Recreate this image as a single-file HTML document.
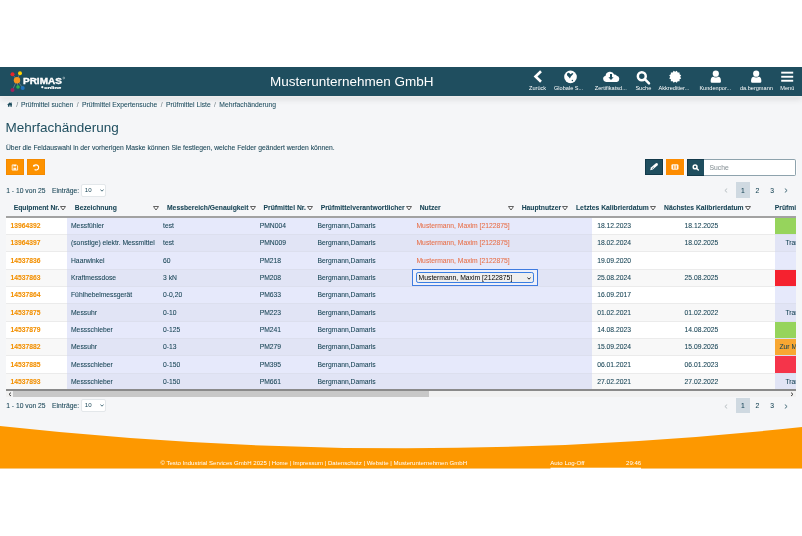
<!DOCTYPE html><html><head><meta charset="utf-8"><style>
*{box-sizing:border-box;margin:0;padding:0}
html,body{width:802px;height:536px;overflow:hidden;background:#fff;font-family:"Liberation Sans",sans-serif;color:#194556}
.a{position:absolute;white-space:nowrap}
#page{position:absolute;left:0;top:67px;width:802px;height:402px;background:#f5f6f8;overflow:hidden;will-change:transform}
#hdr{position:absolute;left:0;top:0;width:802px;height:29px;background:#1f4e5f;box-shadow:0 1.5px 0 #ecebeb,0 4px 6px rgba(0,0,0,.09)}
.lbl{position:absolute;top:18px;font-size:5.6px;line-height:7px;color:#fff;white-space:nowrap}
.t{font-size:6.75px;line-height:9px;-webkit-text-stroke:0.07px}
.b{font-weight:bold}
</style></head><body><div id="page">
<div id="hdr">
<svg class="a" style="left:0;top:0" width="80" height="29" viewBox="0 0 80 29">
<g stroke="#9aa" stroke-width="0.6" opacity="0.8"><line x1="17" y1="13" x2="12.5" y2="7.3"/><line x1="17" y1="13" x2="20" y2="6"/><line x1="17" y1="13" x2="12.5" y2="23"/><line x1="17" y1="13" x2="18" y2="20"/><line x1="17" y1="13" x2="22.7" y2="21"/></g>
<circle cx="12.5" cy="7.3" r="2" fill="#e8262a"/>
<circle cx="20" cy="6.3" r="2" fill="#ffd200"/>
<circle cx="17" cy="13.2" r="3.2" fill="#f7941d"/>
<circle cx="18" cy="20" r="1.8" fill="#2db34a"/>
<circle cx="22.7" cy="21" r="2" fill="#1e73be"/>
<circle cx="12.5" cy="23" r="2" fill="#a0205a"/>
<text x="23" y="16.5" font-family="Liberation Sans" font-weight="bold" font-size="8.8" textLength="38.8" lengthAdjust="spacingAndGlyphs" fill="#fff" stroke="#fff" stroke-width="0.35">PRIMAS</text>
<circle cx="63.8" cy="11" r="0.9" fill="none" stroke="#fff" stroke-width="0.4"/>
<circle cx="42.3" cy="20.2" r="1.1" fill="#fff"/>
<text x="44.2" y="21.6" font-family="Liberation Sans" font-weight="bold" font-size="4.2" textLength="17" lengthAdjust="spacingAndGlyphs" fill="#fff" stroke="#fff" stroke-width="0.2">online</text>
</svg>
<div class="a" style="left:270px;top:5.5px;font-size:13.5px;line-height:17px;color:#fff">Musterunternehmen GmbH</div>
<svg class="a" style="left:500px;top:0" width="302" height="29" viewBox="500 67 302 29">
<polyline points="541,71.2 535.5,76.5 541,81.8" fill="none" stroke="#fff" stroke-width="2.6" stroke-linecap="butt" stroke-linejoin="miter"/>
<circle cx="570.5" cy="76.9" r="6.3" fill="#fff"/>
<path d="M566.9,74.4 Q567,72.7 568.6,72.8 Q569.8,73 570.2,74.3 L572.5,72.9 L573.4,73.8 L570.9,76.6 L569.9,78.4 L568.7,77 Q566.9,75.8 566.9,74.4 Z" fill="#1f4e5f"/>
<circle cx="572.4" cy="80.5" r="0.75" fill="#1f4e5f"/>
<path d="M606,82 a3.2,3.2 0 0 1 -0.4,-6.3 a4.5,4.5 0 0 1 8.6,-1.2 a3,3 0 0 1 2.6,1.3 a3.2,3.2 0 0 1 0.2,6.2 z" fill="#fff"/>
<path d="M610.3,74 v3.2 h-1.6 l2.6,2.8 2.6,-2.8 h-1.6 v-3.2 z" fill="#1f4e5f" transform="translate(-0.3,0)"/>
<circle cx="641.8" cy="76.2" r="3.95" fill="none" stroke="#fff" stroke-width="2.5"/>
<line x1="644.8" y1="79.2" x2="649" y2="83.4" stroke="#fff" stroke-width="2.5" stroke-linecap="round"/>
<polygon points="681.19,78.40 679.53,79.30 679.58,81.18 677.70,81.13 676.80,82.79 675.20,81.80 673.60,82.79 672.70,81.13 670.82,81.18 670.87,79.30 669.21,78.40 670.20,76.80 669.21,75.20 670.87,74.30 670.82,72.42 672.70,72.47 673.60,70.81 675.20,71.80 676.80,70.81 677.70,72.47 679.58,72.42 679.53,74.30 681.19,75.20 680.20,76.80" fill="#fff"/>
<path d="M710.70,81.6 V80.4 Q710.70,76.5 714.30,76.5 H717.30 Q720.90,76.5 720.90,80.4 V81.6 Q720.90,82.8 719.80,82.8 H711.80 Q710.70,82.8 710.70,81.6 Z" fill="#fff"/>
<circle cx="715.8" cy="73.7" r="3.7" fill="#1f4e5f"/>
<circle cx="715.8" cy="73.7" r="3.1" fill="#fff"/>
<path d="M751.10,81.6 V80.4 Q751.10,76.5 754.70,76.5 H757.70 Q761.30,76.5 761.30,80.4 V81.6 Q761.30,82.8 760.20,82.8 H752.20 Q751.10,82.8 751.10,81.6 Z" fill="#fff"/>
<circle cx="756.2" cy="73.7" r="3.7" fill="#1f4e5f"/>
<circle cx="756.2" cy="73.7" r="3.1" fill="#fff"/>
<rect x="781.2" y="71.7" width="12" height="1.9" fill="#fff"/>
<rect x="781.2" y="75.8" width="12" height="1.9" fill="#fff"/>
<rect x="781.2" y="79.8" width="12" height="1.9" fill="#fff"/>
</svg>
<div class="lbl" style="left:529px">Zurück</div>
<div class="lbl" style="left:554px">Globale S...</div>
<div class="lbl" style="left:594.8px">Zertifikatsd...</div>
<div class="lbl" style="left:635.4px">Suche</div>
<div class="lbl" style="left:658.5px">Akkreditier...</div>
<div class="lbl" style="left:699.4px">Kundenpor...</div>
<div class="lbl" style="left:739.9px">da.bergmann</div>
<div class="lbl" style="left:780.3px">Menü</div>
</div>
<svg class="a" style="left:6.7px;top:35px" width="5.8" height="4.8" viewBox="0 0 12 10"><path d="M6,0.5 L0.3,5.5 1.2,6.4 2,5.7 V10 H5 V7 H7 V10 H10 V5.7 L10.8,6.4 11.7,5.5 9.8,3.8 V1 H8.4 V2.6 Z" fill="#1f4e5f"/></svg>
<div class="a t" style="left:16.2px;top:32.5px;color:#1f4e5f"><span style="color:#7d8a90">/</span><span style="margin-left:3px">Prüfmittel suchen</span><span style="margin:0 3.4px;color:#7d8a90">/</span>Prüfmittel Expertensuche<span style="margin:0 3.4px;color:#7d8a90">/</span>Prüfmittel Liste<span style="margin:0 3.4px;color:#7d8a90">/</span>Mehrfachänderung</div>
<div class="a" style="left:5.5px;top:51.5px;font-size:13.5px;line-height:17px;color:#1f4e5f">Mehrfachänderung</div>
<div class="a t" style="left:6px;top:76px">Über die Feldauswahl in der vorherigen Maske können Sie festlegen, welche Felder geändert werden können.</div>
<div class="a" style="left:6px;top:92px;width:18px;height:16px;background:#fd9200;border:0.7px solid #f48a00"></div>
<svg class="a" style="left:6px;top:92px" width="18" height="16" viewBox="0 0 18 16">
<path d="M6.2,5.9 h4.3 l1.1,1.1 v4.1 h-5.4 z" fill="none" stroke="#fff" stroke-width="0.9" opacity=".9"/>
<rect x="7.4" y="5.9" width="2.6" height="1.5" fill="#fff" opacity=".9"/>
<rect x="7.4" y="8.7" width="2.8" height="2.2" fill="#fff" opacity=".9"/>
</svg>
<div class="a" style="left:27px;top:92px;width:18px;height:16px;background:#fd9200;border:0.7px solid #f48a00"></div>
<svg class="a" style="left:27px;top:92px" width="18" height="16" viewBox="0 0 18 16">
<path d="M7.6,10.6 A2.6,2.6 0 1 0 8.4,5.9" fill="none" stroke="#fff" stroke-width="1.15"/>
<polygon points="6.1,6.1 8.6,5.3 8.6,7.2 6.1,7.7" fill="#fff"/>
</svg>
<div class="a" style="left:644.5px;top:91.5px;width:19px;height:16.5px;background:#fff;opacity:.7"></div>
<div class="a" style="left:645px;top:92.4px;width:17.8px;height:15.6px;background:#1f4e5f;border:0.7px solid #12394a"></div>
<svg class="a" style="left:645px;top:92.4px" width="18" height="16" viewBox="0 0 18 16">
<path d="M5.2,11.2 L5.9,8.6 L10.6,4.4 Q11.9,3.6 12.7,4.5 Q13.3,5.5 12.4,6.5 L7.8,10.6 Z" fill="#fff"/><line x1="7" y1="9.8" x2="8.8" y2="8.1" stroke="#1f4e5f" stroke-width="0.6"/>
</svg>
<div class="a" style="left:665.7px;top:91.5px;width:19px;height:16.5px;background:#fff;opacity:.7"></div>
<div class="a" style="left:666.2px;top:92.4px;width:17.7px;height:15.6px;background:#fd8c00"></div>
<svg class="a" style="left:666.2px;top:92.4px" width="18" height="16" viewBox="0 0 18 16">
<rect x="5.4" y="5.2" width="7.1" height="5.6" rx="1.4" fill="#fff" opacity=".92"/>
<rect x="7.3" y="6.4" width="1" height="3.4" fill="#fd8c00"/>
<rect x="9.7" y="6.4" width="1" height="3.4" fill="#fd8c00"/>
</svg>
<div class="a" style="left:686.9px;top:91.5px;width:110px;height:16.7px;background:#fff;opacity:.7;border-radius:2px"></div>
<div class="a" style="left:687.4px;top:92.2px;width:17.2px;height:16.8px;background:#1f4e5f;border:0.7px solid #12394a"></div>
<svg class="a" style="left:687.4px;top:92.2px" width="18" height="16" viewBox="0 0 18 16">
<circle cx="8.1" cy="7.9" r="1.9" fill="none" stroke="#fff" stroke-width="1.5"/>
<line x1="9.5" y1="9.3" x2="11.3" y2="11" stroke="#fff" stroke-width="1.5" stroke-linecap="round"/>
</svg>
<div class="a" style="left:704.4px;top:92.2px;width:92px;height:16.8px;background:#fff;border:1px solid #8ea3ad;border-left:none;border-radius:0 2px 2px 0"></div>
<div class="a t" style="left:709.5px;top:96px;color:#8a9499">Suche</div>

<div class="a t" style="left:6.2px;top:118.80000000000001px">1 - 10 von 25</div>
<div class="a t" style="left:52.1px;top:118.80000000000001px">Einträge:</div>
<div class="a" style="left:80.8px;top:116.50000000000001px;width:25.2px;height:13.2px;background:#fff;border:0.6px solid #e3e7ea;border-radius:2px"></div>
<div class="a" style="left:84.8px;top:119.30000000000001px;font-size:6.1px;line-height:8px">10</div>
<svg class="a" style="left:99.8px;top:121.70000000000002px" width="4" height="3" viewBox="0 0 4 3"><polyline points="0.4,0.5 2,2.2 3.6,0.5" fill="none" stroke="#1f4e5f" stroke-width="0.8"/></svg>
<div class="a t" style="left:6.2px;top:333.9px">1 - 10 von 25</div>
<div class="a t" style="left:52.1px;top:333.9px">Einträge:</div>
<div class="a" style="left:80.8px;top:331.59999999999997px;width:25.2px;height:13.2px;background:#fff;border:0.6px solid #e3e7ea;border-radius:2px"></div>
<div class="a" style="left:84.8px;top:334.4px;font-size:6.1px;line-height:8px">10</div>
<svg class="a" style="left:99.8px;top:336.79999999999995px" width="4" height="3" viewBox="0 0 4 3"><polyline points="0.4,0.5 2,2.2 3.6,0.5" fill="none" stroke="#1f4e5f" stroke-width="0.8"/></svg>
<div class="a" style="left:736px;top:115px;width:14.2px;height:16px;background:#cfd9e1"></div>
<svg class="a" style="left:723.8px;top:121.20px" width="4" height="5" viewBox="0 0 4 5"><polyline points="3.2,0.5 0.9,2.5 3.2,4.5" fill="none" stroke="#a9b3b8" stroke-width="0.8"/></svg>
<div class="a t" style="left:741px;top:118.5px">1</div>
<div class="a t" style="left:755.6px;top:118.5px">2</div>
<div class="a t" style="left:770.3px;top:118.5px">3</div>
<svg class="a" style="left:784.3px;top:121.20px" width="4" height="5" viewBox="0 0 4 5"><polyline points="0.8,0.5 3.1,2.5 0.8,4.5" fill="none" stroke="#1f4e5f" stroke-width="0.8"/></svg>
<div class="a" style="left:736px;top:330.5px;width:14.2px;height:15.6px;background:#cfd9e1"></div>
<svg class="a" style="left:723.8px;top:336.50px" width="4" height="5" viewBox="0 0 4 5"><polyline points="3.2,0.5 0.9,2.5 3.2,4.5" fill="none" stroke="#a9b3b8" stroke-width="0.8"/></svg>
<div class="a t" style="left:741px;top:333.8px">1</div>
<div class="a t" style="left:755.6px;top:333.8px">2</div>
<div class="a t" style="left:770.3px;top:333.8px">3</div>
<svg class="a" style="left:784.3px;top:336.50px" width="4" height="5" viewBox="0 0 4 5"><polyline points="0.8,0.5 3.1,2.5 0.8,4.5" fill="none" stroke="#1f4e5f" stroke-width="0.8"/></svg>
<div class="a" style="left:6px;top:130.00px;width:790px;height:203.00px;overflow:hidden">
<div class="a t b" style="left:7.70px;top:5.60px">Equipment Nr.</div>
<svg class="a" style="left:54.30px;top:8.60px" width="6" height="4.6" viewBox="0 0 6 4.6"><path d="M0.5,0.5 H5.5 L3,4.1 Z" fill="#fff" stroke="#444" stroke-width="0.85" stroke-linejoin="round"/></svg>
<div class="a t b" style="left:68.80px;top:5.60px">Bezeichnung</div>
<svg class="a" style="left:147.00px;top:8.60px" width="6" height="4.6" viewBox="0 0 6 4.6"><path d="M0.5,0.5 H5.5 L3,4.1 Z" fill="#fff" stroke="#444" stroke-width="0.85" stroke-linejoin="round"/></svg>
<div class="a t b" style="left:161.00px;top:5.60px">Messbereich/Genauigkeit</div>
<svg class="a" style="left:243.80px;top:8.60px" width="6" height="4.6" viewBox="0 0 6 4.6"><path d="M0.5,0.5 H5.5 L3,4.1 Z" fill="#fff" stroke="#444" stroke-width="0.85" stroke-linejoin="round"/></svg>
<div class="a t b" style="left:257.50px;top:5.60px">Prüfmittel Nr.</div>
<svg class="a" style="left:301.00px;top:8.60px" width="6" height="4.6" viewBox="0 0 6 4.6"><path d="M0.5,0.5 H5.5 L3,4.1 Z" fill="#fff" stroke="#444" stroke-width="0.85" stroke-linejoin="round"/></svg>
<div class="a t b" style="left:314.70px;top:5.60px">Prüfmittelverantwortlicher</div>
<svg class="a" style="left:400.00px;top:8.60px" width="6" height="4.6" viewBox="0 0 6 4.6"><path d="M0.5,0.5 H5.5 L3,4.1 Z" fill="#fff" stroke="#444" stroke-width="0.85" stroke-linejoin="round"/></svg>
<div class="a t b" style="left:413.70px;top:5.60px">Nutzer</div>
<svg class="a" style="left:502.00px;top:8.60px" width="6" height="4.6" viewBox="0 0 6 4.6"><path d="M0.5,0.5 H5.5 L3,4.1 Z" fill="#fff" stroke="#444" stroke-width="0.85" stroke-linejoin="round"/></svg>
<div class="a t b" style="left:515.70px;top:5.60px">Hauptnutzer</div>
<svg class="a" style="left:556.30px;top:8.60px" width="6" height="4.6" viewBox="0 0 6 4.6"><path d="M0.5,0.5 H5.5 L3,4.1 Z" fill="#fff" stroke="#444" stroke-width="0.85" stroke-linejoin="round"/></svg>
<div class="a t b" style="left:570.00px;top:5.60px">Letztes Kalibrierdatum</div>
<svg class="a" style="left:644.30px;top:8.60px" width="6" height="4.6" viewBox="0 0 6 4.6"><path d="M0.5,0.5 H5.5 L3,4.1 Z" fill="#fff" stroke="#444" stroke-width="0.85" stroke-linejoin="round"/></svg>
<div class="a t b" style="left:658.10px;top:5.60px">Nächstes Kalibrierdatum</div>
<svg class="a" style="left:738.70px;top:8.60px" width="6" height="4.6" viewBox="0 0 6 4.6"><path d="M0.5,0.5 H5.5 L3,4.1 Z" fill="#fff" stroke="#444" stroke-width="0.85" stroke-linejoin="round"/></svg>
<div class="a t b" style="left:768.80px;top:5.60px">Prüfmi</div>
<div class="a" style="left:0;top:19.60px;width:790px;height:17.33px;background:#ffffff"></div>
<div class="a" style="left:60.80px;top:19.60px;width:525.40px;height:17.33px;background:#e6e9fb"></div>
<div class="a" style="left:769.00px;top:19.60px;width:21px;height:17.33px;background:#96d45c"></div>
<div class="a t b" style="left:4.50px;top:24.06px;color:#f39000">13964392</div>
<div class="a t" style="left:65.00px;top:24.06px">Messfühler</div>
<div class="a t" style="left:157.00px;top:24.06px">test</div>
<div class="a t" style="left:253.70px;top:24.06px">PMN004</div>
<div class="a t" style="left:311.60px;top:24.06px">Bergmann,Damaris</div>
<div class="a t" style="left:591.20px;top:24.06px">18.12.2023</div>
<div class="a t" style="left:678.60px;top:24.06px">18.12.2025</div>
<div class="a t" style="left:410.50px;top:24.06px;color:#e8704a">Mustermann, Maxim [2122875]</div>
<div class="a" style="left:0;top:36.93px;width:790px;height:17.33px;background:#f8f8f8"></div>
<div class="a" style="left:60.80px;top:36.93px;width:525.40px;height:17.33px;background:#e1e4f5"></div>
<div class="a" style="left:769.00px;top:36.93px;width:21px;height:17.33px;background:#e1e4f5"></div>
<div class="a" style="left:0;top:36.93px;width:790px;height:1px;background:#ebebeb"></div>
<div class="a" style="left:60.80px;top:36.93px;width:525.40px;height:1px;background:#dcdfee"></div>
<div class="a" style="left:769.00px;top:36.93px;width:21px;height:1px;background:#dcdfee"></div>
<div class="a t b" style="left:4.50px;top:41.40px;color:#f39000">13964397</div>
<div class="a t" style="left:65.00px;top:41.40px">(sonstige) elektr. Messmittel</div>
<div class="a t" style="left:157.00px;top:41.40px">test</div>
<div class="a t" style="left:253.70px;top:41.40px">PMN009</div>
<div class="a t" style="left:311.60px;top:41.40px">Bergmann,Damaris</div>
<div class="a t" style="left:591.20px;top:41.40px">18.02.2024</div>
<div class="a t" style="left:678.60px;top:41.40px">18.02.2025</div>
<div class="a t" style="left:410.50px;top:41.40px;color:#e8704a">Mustermann, Maxim [2122875]</div>
<div class="a t" style="left:779.50px;top:41.40px">Transport</div>
<div class="a" style="left:0;top:54.26px;width:790px;height:17.33px;background:#ffffff"></div>
<div class="a" style="left:60.80px;top:54.26px;width:525.40px;height:17.33px;background:#e6e9fb"></div>
<div class="a" style="left:769.00px;top:54.26px;width:21px;height:17.33px;background:#e6e9fb"></div>
<div class="a" style="left:0;top:54.26px;width:790px;height:1px;background:#ebebeb"></div>
<div class="a" style="left:60.80px;top:54.26px;width:525.40px;height:1px;background:#dcdfee"></div>
<div class="a" style="left:769.00px;top:54.26px;width:21px;height:1px;background:#dcdfee"></div>
<div class="a t b" style="left:4.50px;top:58.73px;color:#f39000">14537836</div>
<div class="a t" style="left:65.00px;top:58.73px">Haarwinkel</div>
<div class="a t" style="left:157.00px;top:58.73px">60</div>
<div class="a t" style="left:253.70px;top:58.73px">PM218</div>
<div class="a t" style="left:311.60px;top:58.73px">Bergmann,Damaris</div>
<div class="a t" style="left:591.20px;top:58.73px">19.09.2020</div>
<div class="a t" style="left:410.50px;top:58.73px;color:#e8704a">Mustermann, Maxim [2122875]</div>
<div class="a" style="left:0;top:71.59px;width:790px;height:17.33px;background:#f8f8f8"></div>
<div class="a" style="left:60.80px;top:71.59px;width:525.40px;height:17.33px;background:#e1e4f5"></div>
<div class="a" style="left:769.00px;top:71.59px;width:21px;height:17.33px;background:#f5222f"></div>
<div class="a" style="left:0;top:71.59px;width:790px;height:1px;background:#ebebeb"></div>
<div class="a" style="left:60.80px;top:71.59px;width:525.40px;height:1px;background:#dcdfee"></div>
<div class="a" style="left:769.00px;top:71.59px;width:21px;height:1px;background:#dcdfee"></div>
<div class="a t b" style="left:4.50px;top:76.06px;color:#f39000">14537863</div>
<div class="a t" style="left:65.00px;top:76.06px">Kraftmessdose</div>
<div class="a t" style="left:157.00px;top:76.06px">3 kN</div>
<div class="a t" style="left:253.70px;top:76.06px">PM208</div>
<div class="a t" style="left:311.60px;top:76.06px">Bergmann,Damaris</div>
<div class="a t" style="left:591.20px;top:76.06px">25.08.2024</div>
<div class="a t" style="left:678.60px;top:76.06px">25.08.2025</div>
<div class="a" style="left:0;top:88.92px;width:790px;height:17.33px;background:#ffffff"></div>
<div class="a" style="left:60.80px;top:88.92px;width:525.40px;height:17.33px;background:#e6e9fb"></div>
<div class="a" style="left:769.00px;top:88.92px;width:21px;height:17.33px;background:#e6e9fb"></div>
<div class="a" style="left:0;top:88.92px;width:790px;height:1px;background:#ebebeb"></div>
<div class="a" style="left:60.80px;top:88.92px;width:525.40px;height:1px;background:#dcdfee"></div>
<div class="a" style="left:769.00px;top:88.92px;width:21px;height:1px;background:#dcdfee"></div>
<div class="a t b" style="left:4.50px;top:93.38px;color:#f39000">14537864</div>
<div class="a t" style="left:65.00px;top:93.38px">Fühlhebelmessgerät</div>
<div class="a t" style="left:157.00px;top:93.38px">0-0,20</div>
<div class="a t" style="left:253.70px;top:93.38px">PM633</div>
<div class="a t" style="left:311.60px;top:93.38px">Bergmann,Damaris</div>
<div class="a t" style="left:591.20px;top:93.38px">16.09.2017</div>
<div class="a" style="left:0;top:106.25px;width:790px;height:17.33px;background:#f8f8f8"></div>
<div class="a" style="left:60.80px;top:106.25px;width:525.40px;height:17.33px;background:#e1e4f5"></div>
<div class="a" style="left:769.00px;top:106.25px;width:21px;height:17.33px;background:#e1e4f5"></div>
<div class="a" style="left:0;top:106.25px;width:790px;height:1px;background:#ebebeb"></div>
<div class="a" style="left:60.80px;top:106.25px;width:525.40px;height:1px;background:#dcdfee"></div>
<div class="a" style="left:769.00px;top:106.25px;width:21px;height:1px;background:#dcdfee"></div>
<div class="a t b" style="left:4.50px;top:110.72px;color:#f39000">14537875</div>
<div class="a t" style="left:65.00px;top:110.72px">Messuhr</div>
<div class="a t" style="left:157.00px;top:110.72px">0-10</div>
<div class="a t" style="left:253.70px;top:110.72px">PM223</div>
<div class="a t" style="left:311.60px;top:110.72px">Bergmann,Damaris</div>
<div class="a t" style="left:591.20px;top:110.72px">01.02.2021</div>
<div class="a t" style="left:678.60px;top:110.72px">01.02.2022</div>
<div class="a t" style="left:779.50px;top:110.72px">Transport</div>
<div class="a" style="left:0;top:123.58px;width:790px;height:17.33px;background:#ffffff"></div>
<div class="a" style="left:60.80px;top:123.58px;width:525.40px;height:17.33px;background:#e6e9fb"></div>
<div class="a" style="left:769.00px;top:123.58px;width:21px;height:17.33px;background:#96d45c"></div>
<div class="a" style="left:0;top:123.58px;width:790px;height:1px;background:#ebebeb"></div>
<div class="a" style="left:60.80px;top:123.58px;width:525.40px;height:1px;background:#dcdfee"></div>
<div class="a" style="left:769.00px;top:123.58px;width:21px;height:1px;background:#dcdfee"></div>
<div class="a t b" style="left:4.50px;top:128.05px;color:#f39000">14537879</div>
<div class="a t" style="left:65.00px;top:128.05px">Messschieber</div>
<div class="a t" style="left:157.00px;top:128.05px">0-125</div>
<div class="a t" style="left:253.70px;top:128.05px">PM241</div>
<div class="a t" style="left:311.60px;top:128.05px">Bergmann,Damaris</div>
<div class="a t" style="left:591.20px;top:128.05px">14.08.2023</div>
<div class="a t" style="left:678.60px;top:128.05px">14.08.2025</div>
<div class="a" style="left:0;top:140.91px;width:790px;height:17.33px;background:#f8f8f8"></div>
<div class="a" style="left:60.80px;top:140.91px;width:525.40px;height:17.33px;background:#e1e4f5"></div>
<div class="a" style="left:769.00px;top:140.91px;width:21px;height:17.33px;background:#f8a732"></div>
<div class="a" style="left:0;top:140.91px;width:790px;height:1px;background:#ebebeb"></div>
<div class="a" style="left:60.80px;top:140.91px;width:525.40px;height:1px;background:#dcdfee"></div>
<div class="a" style="left:769.00px;top:140.91px;width:21px;height:1px;background:#dcdfee"></div>
<div class="a t b" style="left:4.50px;top:145.38px;color:#f39000">14537882</div>
<div class="a t" style="left:65.00px;top:145.38px">Messuhr</div>
<div class="a t" style="left:157.00px;top:145.38px">0-13</div>
<div class="a t" style="left:253.70px;top:145.38px">PM279</div>
<div class="a t" style="left:311.60px;top:145.38px">Bergmann,Damaris</div>
<div class="a t" style="left:591.20px;top:145.38px">15.09.2024</div>
<div class="a t" style="left:678.60px;top:145.38px">15.09.2026</div>
<div class="a t" style="left:773.40px;top:145.38px">Zur Messung</div>
<div class="a" style="left:0;top:158.24px;width:790px;height:17.33px;background:#ffffff"></div>
<div class="a" style="left:60.80px;top:158.24px;width:525.40px;height:17.33px;background:#e6e9fb"></div>
<div class="a" style="left:769.00px;top:158.24px;width:21px;height:17.33px;background:#f5344a"></div>
<div class="a" style="left:0;top:158.24px;width:790px;height:1px;background:#ebebeb"></div>
<div class="a" style="left:60.80px;top:158.24px;width:525.40px;height:1px;background:#dcdfee"></div>
<div class="a" style="left:769.00px;top:158.24px;width:21px;height:1px;background:#dcdfee"></div>
<div class="a t b" style="left:4.50px;top:162.71px;color:#f39000">14537885</div>
<div class="a t" style="left:65.00px;top:162.71px">Messschieber</div>
<div class="a t" style="left:157.00px;top:162.71px">0-150</div>
<div class="a t" style="left:253.70px;top:162.71px">PM395</div>
<div class="a t" style="left:311.60px;top:162.71px">Bergmann,Damaris</div>
<div class="a t" style="left:591.20px;top:162.71px">06.01.2021</div>
<div class="a t" style="left:678.60px;top:162.71px">06.01.2023</div>
<div class="a" style="left:0;top:175.57px;width:790px;height:17.33px;background:#f8f8f8"></div>
<div class="a" style="left:60.80px;top:175.57px;width:525.40px;height:17.33px;background:#e1e4f5"></div>
<div class="a" style="left:769.00px;top:175.57px;width:21px;height:17.33px;background:#e1e4f5"></div>
<div class="a" style="left:0;top:175.57px;width:790px;height:1px;background:#ebebeb"></div>
<div class="a" style="left:60.80px;top:175.57px;width:525.40px;height:1px;background:#dcdfee"></div>
<div class="a" style="left:769.00px;top:175.57px;width:21px;height:1px;background:#dcdfee"></div>
<div class="a t b" style="left:4.50px;top:180.03px;color:#f39000">14537893</div>
<div class="a t" style="left:65.00px;top:180.03px">Messschieber</div>
<div class="a t" style="left:157.00px;top:180.03px">0-150</div>
<div class="a t" style="left:253.70px;top:180.03px">PM661</div>
<div class="a t" style="left:311.60px;top:180.03px">Bergmann,Damaris</div>
<div class="a t" style="left:591.20px;top:180.03px">27.02.2021</div>
<div class="a t" style="left:678.60px;top:180.03px">27.02.2022</div>
<div class="a t" style="left:779.50px;top:180.03px">Transport</div>
<div class="a" style="left:0;top:19.00px;width:790px;height:1.8px;background:#a2a2a2"></div>
<div class="a" style="left:406.10px;top:72.00px;width:125.7px;height:17px;border:1.5px solid #3f7be0;border-radius:0.5px;background:#eef0fa"></div>
<div class="a" style="left:409.80px;top:74.90px;width:118.2px;height:10.9px;border:1.1px solid #3a7ee2;border-radius:2.2px;background:#efefef"></div>
<div class="a" style="left:412.60px;top:76.00px;font-size:6.8px;line-height:9px;color:#000">Mustermann, Maxim [2122875]</div>
<svg class="a" style="left:521.30px;top:79.50px" width="4" height="3" viewBox="0 0 4 3"><polyline points="0.4,0.5 2,2.2 3.6,0.5" fill="none" stroke="#222" stroke-width="1"/></svg>
<div class="a" style="left:0;top:191.80px;width:790px;height:1.9px;background:#8a8a8a"></div>
<div class="a" style="left:0;top:193.60px;width:790px;height:6.4px;background:#f1f1f1"></div>
<div class="a" style="left:7.00px;top:193.80px;width:416.40px;height:6px;background:#c8c8c8"></div>
<div class="a" style="left:0;top:193.60px;width:7px;height:6.4px;background:#f1f1f1"></div>
<svg class="a" style="left:2.00px;top:194.50px" width="4" height="5" viewBox="0 0 4 5"><polyline points="3,0.6 1,2.3 3,4" fill="none" stroke="#333" stroke-width="0.9"/></svg>
<svg class="a" style="left:783.50px;top:194.50px" width="4" height="5" viewBox="0 0 4 5"><polyline points="1,0.6 3,2.3 1,4" fill="none" stroke="#333" stroke-width="0.9"/></svg>
</div>
<svg class="a" style="left:0;top:353px" width="802" height="50" viewBox="0 420 802 50">
<path d="M0,426 Q401,470 802,427 V468.6 H0 Z" fill="#fd9800"/>
<rect x="550.5" y="467.7" width="90.5" height="3" fill="#fff"/>
</svg>
<div class="a" style="left:160.4px;top:392.3px;font-size:6.08px;line-height:8px;color:#fff">© Testo Industrial Services GmbH 2025 | Home | Impressum | Datenschutz | Website | Musterunternehmen GmbH</div>
<div class="a" style="left:550.2px;top:391.9px;font-size:6.08px;line-height:8px;color:#fff">Auto Log-Off</div>
<div class="a" style="left:626px;top:391.9px;font-size:6.08px;line-height:8px;color:#fff">29:46</div>
</div></body></html>
